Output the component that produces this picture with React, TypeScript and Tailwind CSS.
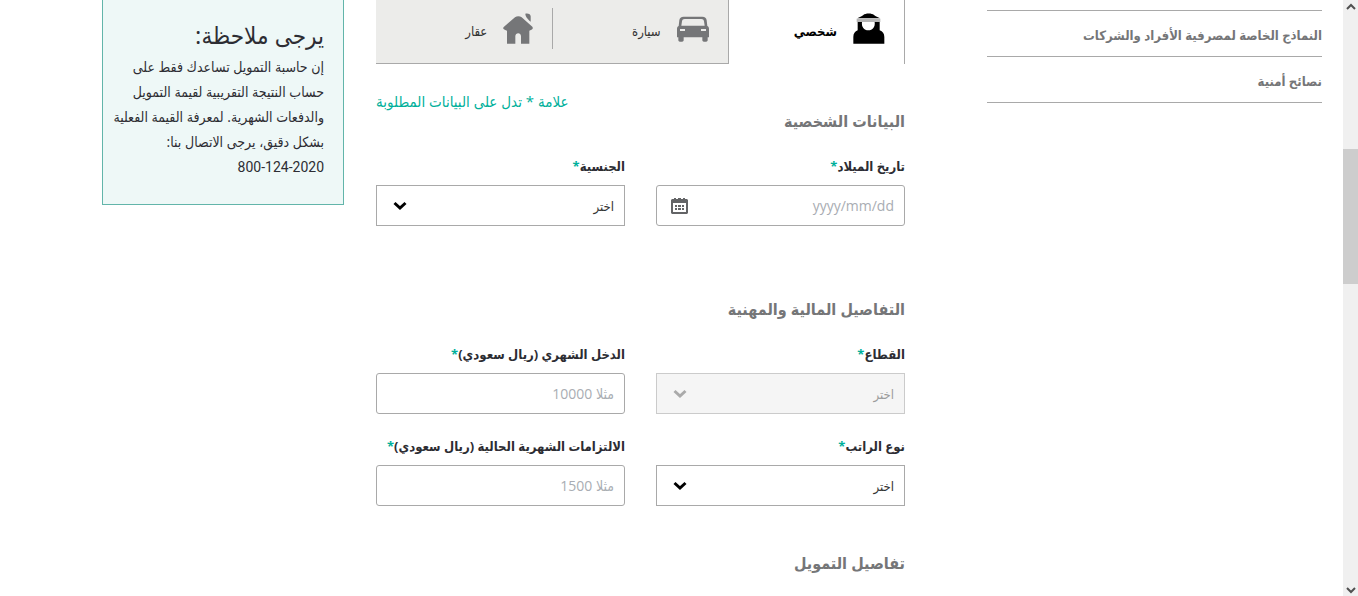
import React, { useState } from 'react';
import clsx from 'clsx';

const PersonIcon = () => (
  <svg width="32" height="31" viewBox="0 0 96 93" aria-hidden="true" className="shrink-0">
    <path d="M13 16C19 12 26 11 31 6C37 0 57 0 63 6C68 11 75 12 81 16Z" fill="#000" />
    <path d="M11 17H82V27H11Z" fill="#b5b5b5" />
    <path
      d="M14 27H80V52C89 55 94 62 94 72V92H1V72C1 62 6 55 14 52ZM27 27C25 42 33 52 46 52C59 52 67 42 65 27Z"
      fill="#000"
      fillRule="evenodd"
    />
  </svg>
);

const CarIcon = () => (
  <svg width="32" height="31" viewBox="0 0 96 93" aria-hidden="true" className="shrink-0">
    <path
      d="M20 11H76C84 11 88 15 89 22L91 39C95 41 96 44 96 48V73H92V82C92 88 76 88 76 82V73H20V82C20 88 4 88 4 82V73H0V48C0 44 1 41 5 39L7 22C8 15 12 11 20 11ZM23 18C18 18 16 20 15 25L13 38H83L81 25C80 20 78 18 73 18ZM9 48V54H24V48ZM72 48V54H87V48Z"
      fill="#757678"
      fillRule="evenodd"
    />
  </svg>
);

const HouseIcon = () => (
  <svg width="30" height="31" viewBox="0 0 90 93" aria-hidden="true" className="shrink-0">
    <path
      d="M36 13C42 9 50 9 56 13L88 41C91 45 89 49 85 50L79 53V92H54V70C54 58 37 58 37 70V92H12V53L5 50C0 48 -1 44 3 41Z"
      fill="#757678"
    />
    <path d="M67 2C76 0 83 4 83 10V26C78 22 67 12 67 2Z" fill="#757678" />
  </svg>
);

const CalendarIcon = () => (
  <svg width="17" height="16" viewBox="0 0 17 16" aria-hidden="true" className="pointer-events-none absolute left-[15px] top-[13px]">
    <path
      d="M1 1H3V0H5V1H7V0H10V1H12V0H14V1H16L17 2V15L16 16H1L0 15V2ZM2 5V14H15V5Z"
      fill="#636466"
      fillRule="evenodd"
    />
    <path d="M4 7h2v2H4zM7 7h3v2H7zM11 7h2v2h-2zM4 10h2v2H4zM7 10h3v2H7zM11 10h2v2h-2z" fill="#636466" />
  </svg>
);

const Chevron = ({ className }: { className?: string }) => (
  <svg width="14" height="10" viewBox="0 0 14 10" fill="none" stroke="currentColor" strokeWidth="3" aria-hidden="true" className={className}>
    <path d="M1.500 2L7 7L12.500 2" />
  </svg>
);

interface FieldProps {
  id: string;
  label: string;
  children: React.ReactNode;
}

const Field = ({ id, label, children }: FieldProps) => (
  <div className="min-w-0">
    <label htmlFor={id} className="mb-[9px] block h-5 whitespace-nowrap text-[13px] font-bold leading-5 text-[#2d2d33]">
      {label}
      <span className="text-[#00b09b]">*</span>
    </label>
    <div className="relative">{children}</div>
  </div>
);

const SelectBox = ({ id, disabled }: { id: string; disabled?: boolean }) => (
  <>
    <select
      id={id}
      disabled={disabled}
      className={clsx(
        'block h-[41px] w-full appearance-none border px-2.5 pt-0.5 text-[13px]',
        disabled ? 'border-[#cbcbcb] bg-[#f5f5f5] text-[#9b9b9b] opacity-100' : 'border-[#a9a9a9] bg-white text-[#333]'
      )}
    >
      <option>اختر</option>
    </select>
    <Chevron className={clsx('pointer-events-none absolute left-[17px] top-4', disabled ? 'text-[#aaa]' : 'text-black')} />
  </>
);

const TextBox = ({ id, placeholder }: { id: string; placeholder: string }) => (
  <input
    id={id}
    type="text"
    placeholder={placeholder}
    className="block h-[41px] w-full rounded-[3px] border border-[#a9a9a9] bg-white px-2.5 text-sm text-[#333] placeholder:text-[#a9adb3]"
  />
);

const SectionTitle = ({ children }: { children: React.ReactNode }) => (
  <h2 className="text-base font-bold leading-6 text-[#757678]">{children}</h2>
);

const tabs = [
  { key: 'personal', label: 'شخصي', icon: <PersonIcon /> },
  { key: 'car', label: 'سيارة', icon: <CarIcon /> },
  { key: 'home', label: 'عقار', icon: <HouseIcon /> },
];

const links = ['النماذج الخاصة لمصرفية الأفراد والشركات', 'نصائح أمنية'];

const Sidebar = () => (
  <nav className="w-[335px] shrink-0 pt-2.5">
    <ul className="border-t border-[#a9a9a9]">
      {links.map((link) => (
        <li key={link} className="border-b border-[#a9a9a9]">
          <a href="#" className="block whitespace-nowrap pb-[11px] pt-3.5 text-[13px] font-bold leading-5 text-[#757678]">
            {link}
          </a>
        </li>
      ))}
    </ul>
  </nav>
);

const Calculator = () => {
  const [active, setActive] = useState('personal');

  return (
    <main className="min-w-0 flex-1">
      <div className="grid h-16 grid-cols-3">
        {tabs.map(({ key, label, icon }, i) => (
          <button
            key={key}
            type="button"
            onClick={() => setActive(key)}
            className={clsx(
              'flex items-start border-[#a9a9a9] pt-2',
              key === active ? 'border-r bg-white font-bold text-black' : 'border-b bg-[#ececea] text-[#333]',
              i === 1 && 'border-r'
            )}
          >
            <span className={clsx('flex h-[41px] w-full items-center gap-4 pr-[19px] text-[13px]', i === 1 && 'border-l border-[#a9a9a9]')}>
              {icon}
              <span className="pt-1.5">{label}</span>
            </span>
          </button>
        ))}
      </div>

      <div className="mt-[27px] flex h-[42px] justify-between">
        <div className="self-end">
          <SectionTitle>البيانات الشخصية</SectionTitle>
        </div>
        <p className="text-[15px] leading-5 text-[#00b09b]">علامة * تدل على البيانات المطلوبة</p>
      </div>
      <div className="mt-[23px] grid grid-cols-2 gap-x-[31px]">
        <Field id="birth" label="تاريخ الميلاد">
          <TextBox id="birth" placeholder="yyyy/mm/dd" />
          <CalendarIcon />
        </Field>
        <Field id="nationality" label="الجنسية">
          <SelectBox id="nationality" />
        </Field>
      </div>

      <div className="mt-[71px]">
        <SectionTitle>التفاصيل المالية والمهنية</SectionTitle>
      </div>
      <div className="mt-[23px] grid grid-cols-2 gap-x-[31px] gap-y-[22px]">
        <Field id="sector" label="القطاع">
          <SelectBox id="sector" disabled />
        </Field>
        <Field id="income" label="الدخل الشهري (ريال سعودي)">
          <TextBox id="income" placeholder="مثلا 10000" />
        </Field>
        <Field id="salary" label="نوع الراتب">
          <SelectBox id="salary" />
        </Field>
        <Field id="commitments" label="الالتزامات الشهرية الحالية (ريال سعودي)">
          <TextBox id="commitments" placeholder="مثلا 1500" />
        </Field>
      </div>

      <div className="mt-[45px]">
        <SectionTitle>تفاصيل التمويل</SectionTitle>
      </div>
    </main>
  );
};

const Note = () => (
  <aside className="w-[242px] shrink-0 self-start whitespace-nowrap border border-t-0 border-[#62b5aa] bg-[#eef8f7] pb-6 pr-[19px] pt-[18px] text-[#2d2d33]">
    <h2 className="mb-0.5 text-2xl leading-[34px]">يرجى ملاحظة:</h2>
    <p className="text-sm leading-[25px]">
      إن حاسبة التمويل تساعدك فقط على
      <br />
      حساب النتيجة التقريبية لقيمة التمويل
      <br />
      والدفعات الشهرية. لمعرفة القيمة الفعلية
      <br />
      بشكل دقيق، يرجى الاتصال بنا:
      <br />
      <bdi className="font-['Roboto',sans-serif]">800-124-2020</bdi>
    </p>
  </aside>
);

const ScrollRail = () => (
  <div className="flex w-[15px] shrink-0 flex-col bg-[#f0f0f0] text-[#505050]" aria-hidden="true">
    <svg width="15" height="17" viewBox="0 0 15 17" fill="none" stroke="currentColor" strokeWidth="2">
      <path d="M4 9L8 5L12 9" />
    </svg>
    <div className="grow-[132]" />
    <div className="grow-[135] bg-[#cdcdcd]" />
    <div className="grow-[295]" />
    <svg width="15" height="17" viewBox="0 0 15 17" fill="none" stroke="currentColor" strokeWidth="2">
      <path d="M4 9L8 13L12 9" />
    </svg>
  </div>
);

export default function App() {
  return (
    <div className="flex min-h-screen bg-white font-['Open_Sans','DejaVu_Sans_Condensed','DejaVu_Sans',sans-serif]">
      <div dir="rtl" className="flex min-w-0 flex-1 pl-[102px] pr-[21px]">
        <Sidebar />
        <div className="mr-[82px] flex min-w-0 flex-1 gap-8">
          <Calculator />
          <Note />
        </div>
      </div>
      <ScrollRail />
    </div>
  );
}
